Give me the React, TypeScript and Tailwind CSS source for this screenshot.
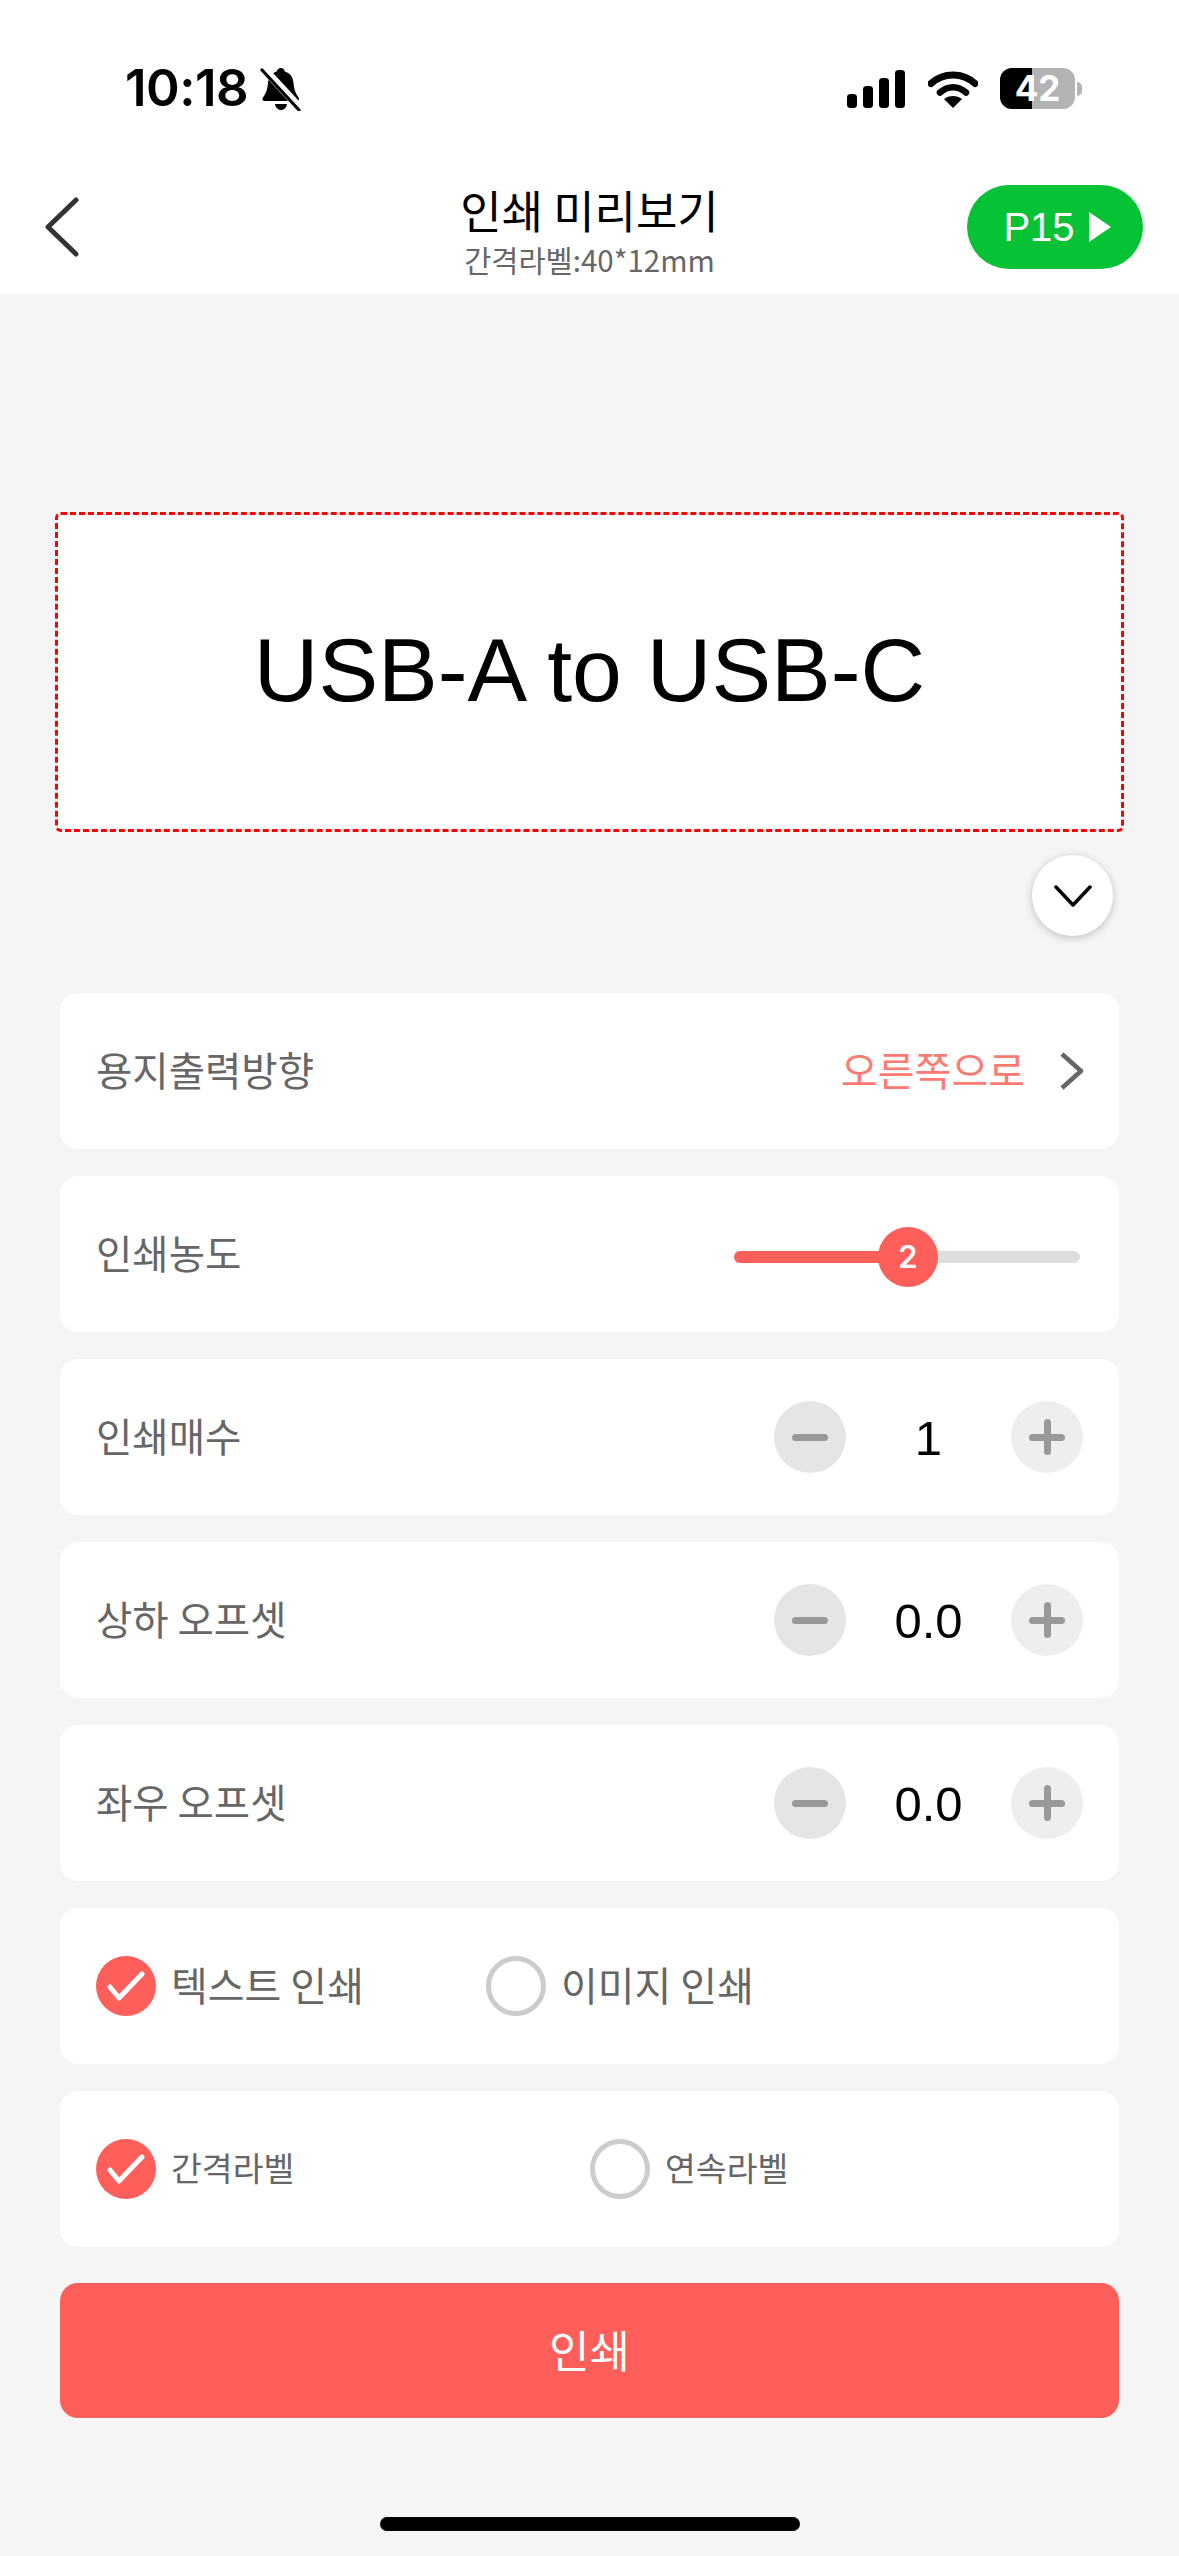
const KR = "font-['Noto_Sans_CJK_KR','Liberation_Sans',sans-serif]";

function StatusBar() {
  return (
    <div className="flex h-[160px] items-start justify-between bg-white pt-[62px] pl-[125px] pr-[97px]">
      <div className="flex items-center gap-[12px]">
        <span className="font-['Inter',sans-serif] text-[51px] leading-[52px] font-semibold tracking-[-0.5px] text-black">10:18</span>
        <svg width="42" height="44" viewBox="0 0 42 44" className="mt-[2px]">
          <path d="M21 1c2 0 3.500 1.500 3.800 3.500 5.500 1.500 8.200 6 8.700 11.500.400 5 1.500 10 5 14.500 1.200 1.800.200 3.500-2 3.500H5c-2.200 0-3.200-1.700-2-3.500 3.500-4.500 4.600-9.500 5-14.500.500-5.500 3.200-10 8.700-11.500C17 2.500 19 1 21 1z" fill="#000" />
          <path d="M15 37h12c-.500 3.500-3 6-6 6s-5.500-2.500-6-6z" fill="#000" />
          <path d="M3 1l37 40" stroke="#fff" strokeWidth="8" />
          <path d="M2 3l37 40" stroke="#000" strokeWidth="3.200" strokeLinecap="round" />
        </svg>
      </div>
      <div className="flex items-center pt-[6px]">
        <svg width="58" height="38" viewBox="0 0 58 38">
          <rect x="0" y="24" width="10" height="14" rx="3.500" fill="#000" />
          <rect x="16" y="16" width="10" height="22" rx="3.500" fill="#000" />
          <rect x="32" y="8" width="10" height="30" rx="3.500" fill="#000" />
          <rect x="48" y="0" width="10" height="38" rx="3.500" fill="#000" />
        </svg>
        <svg width="50" height="38" viewBox="0 0 50 38" className="ml-[23px]">
          <path d="M3 13.500C15 2 35 2 47 13.500" fill="none" stroke="#000" strokeWidth="7" strokeLinecap="round" />
          <path d="M12 22.500c8-7 18-7 26 0" fill="none" stroke="#000" strokeWidth="6.500" strokeLinecap="round" />
          <path d="M25 38l-9-9c5-4 13-4 18 0z" fill="#000" />
        </svg>
        <div className="ml-[22px] flex items-center">
          <div className="relative flex h-[41px] w-[75px] overflow-hidden rounded-[12px] bg-[#b3b3b3]">
            <div className="h-full w-[32px] bg-black" />
            <span className="absolute inset-0 flex items-center justify-center font-['Inter',sans-serif] text-[35px] leading-none font-bold text-white">42</span>
          </div>
          <div className="ml-[2px] h-[14px] w-[5px] rounded-r-full bg-[#b3b3b3]" />
        </div>
      </div>
    </div>
  );
}

function NavBar() {
  return (
    <div className="relative flex h-[134px] items-start justify-between bg-white pl-[45px] pr-[36px]">
      <svg width="34" height="60" viewBox="0 0 34 60" fill="none" className="mt-[37px]">
        <path d="M31 3L3 30l28 27" stroke="#333" strokeWidth="5" strokeLinecap="round" strokeLinejoin="round" />
      </svg>
      <div className={`absolute left-0 right-0 top-[25px] flex flex-col items-center ${KR}`}>
        <span className="text-[45px] leading-[50px] text-black">인쇄 미리보기</span>
        <span className="mt-[8px] text-[29.500px] leading-[32px] text-[#666]">간격라벨:40*12mm</span>
      </div>
      <div className="mt-[25px] flex h-[84px] w-[176px] items-center justify-center gap-[14px] rounded-full bg-[#07c235] pl-[4px]">
        <span className="font-['Liberation_Sans',sans-serif] text-[40px] leading-none text-white">P15</span>
        <svg width="22" height="30" viewBox="0 0 22 30"><path d="M0 0l22 15L0 30z" fill="#fff" /></svg>
      </div>
    </div>
  );
}

function Card({ children }: { children: React.ReactNode }) {
  return <div className="flex h-[156px] items-center justify-between rounded-[18px] bg-white px-[36px]">{children}</div>;
}

function Label({ text }: { text: string }) {
  return <span className={`pb-[4px] text-[39.500px] leading-[44px] text-[#666] ${KR}`}>{text}</span>;
}

function Stepper({ label, value }: { label: string; value: string }) {
  return (
    <Card>
      <Label text={label} />
      <div className="flex items-center">
        <div className="flex h-[72px] w-[72px] items-center justify-center rounded-full bg-[#e5e5e5]">
          <div className="h-[7px] w-[36px] rounded-full bg-[#999]" />
        </div>
        <span className="w-[165px] pt-[2px] text-center font-['Liberation_Sans',sans-serif] text-[49px] leading-none text-black">{value}</span>
        <div className="relative flex h-[72px] w-[72px] items-center justify-center rounded-full bg-[#eeeeee]">
          <div className="h-[7px] w-[36px] rounded-full bg-[#999]" />
          <div className="absolute h-[36px] w-[7px] rounded-full bg-[#999]" />
        </div>
      </div>
    </Card>
  );
}

function Radio({ checked }: { checked?: boolean }) {
  if (checked) {
    return (
      <div className="flex h-[60px] w-[60px] shrink-0 items-center justify-center rounded-full bg-[#ff5f5a]">
        <svg width="38" height="30" viewBox="0 0 38 30" fill="none">
          <path d="M3 16l9 11L35 3" stroke="#fff" strokeWidth="5" strokeLinecap="round" strokeLinejoin="round" />
        </svg>
      </div>
    );
  }
  return <div className="h-[60px] w-[60px] shrink-0 rounded-full border-[5px] border-[#cccccc] bg-white" />;
}

function Option({ text, checked, small, className }: { text: string; checked?: boolean; small?: boolean; className: string }) {
  return (
    <div className={`flex items-center gap-[15px] ${className}`}>
      <Radio checked={checked} />
      <span className={`${small ? "text-[33.500px]" : "text-[40px]"} pb-[4px] leading-[44px] text-[#666] ${KR}`}>{text}</span>
    </div>
  );
}

export default function App() {
  return (
    <div className="h-[2556px] w-[1179px] overflow-hidden bg-[#f5f5f5]">
      <StatusBar />
      <NavBar />

      <div className="mx-[55px] mt-[218px] flex h-[320px] items-center justify-center rounded-[6px] border-[3px] border-dashed border-[#ff0000] bg-white">
        <span className="pb-[2px] font-['Liberation_Sans',sans-serif] text-[89.500px] leading-none text-black">USB-A to USB-C</span>
      </div>

      <div className="mt-[23px] flex justify-end pr-[66px]">
        <div className="flex h-[81px] w-[81px] items-center justify-center rounded-full bg-white shadow-[0_2px_8px_rgba(0,0,0,0.22)]">
          <svg width="38" height="22" viewBox="0 0 38 22" fill="none">
            <path d="M2 2l17 18L36 2" stroke="#000" strokeWidth="3.500" strokeLinecap="round" strokeLinejoin="round" />
          </svg>
        </div>
      </div>

      <div className="mx-[60px] mt-[57px] flex flex-col gap-[27px]">
        <Card>
          <Label text="용지출력방향" />
          <div className="flex items-center">
            <span className={`pb-[4px] text-[40px] leading-[44px] text-[#ff7a70] ${KR}`}>오른쪽으로</span>
            <svg width="24" height="38" viewBox="0 0 24 38" fill="none" className="ml-[35px] mr-[-1px]">
              <path d="M2 2l19 17L2 36" stroke="#666" strokeWidth="4.500" strokeLinejoin="round" />
            </svg>
          </div>
        </Card>

        <Card>
          <Label text="인쇄농도" />
          <div className="relative mr-[3px] mt-[5px] flex h-[12px] w-[346px] overflow-visible rounded-full bg-[#dddddd]">
            <div className="h-full w-[174px] rounded-full bg-[#ff5f5a]" />
            <div className="absolute left-[144px] top-[-24px] flex h-[60px] w-[60px] items-center justify-center rounded-full bg-[#ff5f5a] font-['Inter',sans-serif] text-[31px] leading-none font-semibold text-white">2</div>
          </div>
        </Card>

        <Stepper label="인쇄매수" value="1" />
        <Stepper label="상하 오프셋" value="0.0" />
        <Stepper label="좌우 오프셋" value="0.0" />

        <Card>
          <div className="flex w-full items-center">
            <Option text="텍스트 인쇄" checked className="w-[390px]" />
            <Option text="이미지 인쇄" className="" />
          </div>
        </Card>

        <Card>
          <div className="flex w-full items-center">
            <Option text="간격라벨" checked small className="w-[494px]" />
            <Option text="연속라벨" small className="" />
          </div>
        </Card>
      </div>

      <div className={`mx-[60px] mt-[36px] flex h-[135px] items-center justify-center rounded-[18px] bg-[#ff5f5a] pb-[4px] text-[44px] leading-none text-white ${KR}`}>
        인쇄
      </div>

      <div className="mx-auto mt-[99px] h-[14px] w-[420px] rounded-full bg-black" />
    </div>
  );
}
